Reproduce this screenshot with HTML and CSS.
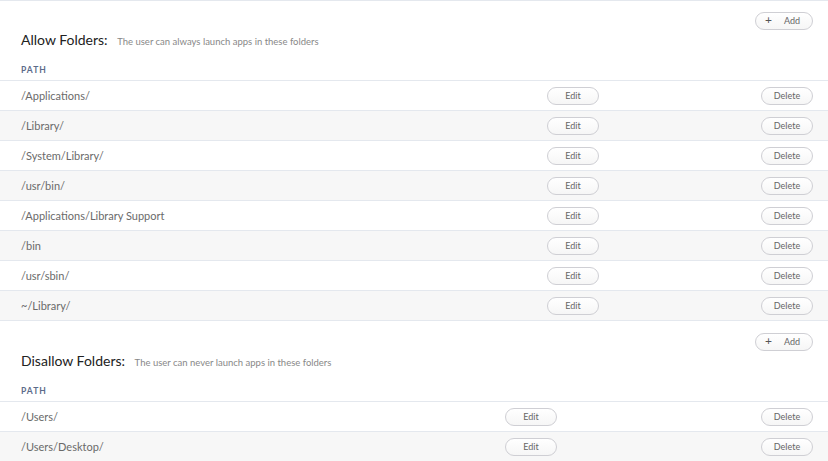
FILE: index.html
```html
<!DOCTYPE html>
<html lang="en">
<head>
  <meta charset="UTF-8">
  <title>Folder Rules</title>
  <link rel="stylesheet" href="styles.css">
</head>
<body>
  <section class="block">
    <div class="block-actions">
      <button class="pill pill-add"><span class="plus">+</span>Add</button>
    </div>
    <h2 class="block-title">Allow Folders: <span class="block-sub">The user can always launch apps in these folders</span></h2>
    <div class="folders">
      <div class="folders-head">PATH</div>
      <div class="row"><span class="path">/Applications/</span><button class="pill">Edit</button><button class="pill">Delete</button></div>
      <div class="row"><span class="path">/Library/</span><button class="pill">Edit</button><button class="pill">Delete</button></div>
      <div class="row"><span class="path">/System/Library/</span><button class="pill">Edit</button><button class="pill">Delete</button></div>
      <div class="row"><span class="path">/usr/bin/</span><button class="pill">Edit</button><button class="pill">Delete</button></div>
      <div class="row"><span class="path">/Applications/Library Support</span><button class="pill">Edit</button><button class="pill">Delete</button></div>
      <div class="row"><span class="path">/bin</span><button class="pill">Edit</button><button class="pill">Delete</button></div>
      <div class="row"><span class="path">/usr/sbin/</span><button class="pill">Edit</button><button class="pill">Delete</button></div>
      <div class="row"><span class="path">~/Library/</span><button class="pill">Edit</button><button class="pill">Delete</button></div>
    </div>
  </section>

  <section class="block">
    <div class="block-actions">
      <button class="pill pill-add"><span class="plus">+</span>Add</button>
    </div>
    <h2 class="block-title">Disallow Folders: <span class="block-sub">The user can never launch apps in these folders</span></h2>
    <div class="folders folders-deny">
      <div class="folders-head">PATH</div>
      <div class="row"><span class="path">/Users/</span><button class="pill">Edit</button><button class="pill">Delete</button></div>
      <div class="row"><span class="path">/Users/Desktop/</span><button class="pill">Edit</button><button class="pill">Delete</button></div>
    </div>
  </section>
</body>
</html>
```

FILE: styles.css
```css
* {
  box-sizing: border-box;
}

body {
  margin: 0;
  background: #fff;
  font-family: Lato, 'Noto Sans', sans-serif;
  color: #555;
}

.block {
  padding-top: 12px;
}

.block:first-child {
  border-top: 1px solid #e4e8ee;
  padding-top: 11px;
}

.block-actions {
  display: flex;
  justify-content: flex-end;
  padding-right: 15px;
}

.block-title {
  margin: 0;
  height: 21px;
  line-height: 20px;
  padding-left: 21px;
  font-size: 14px;
  font-weight: 400;
  color: #222;
}

.block-sub {
  margin-left: 6px;
  font-size: 9.5px;
  color: #888;
}

.pill {
  height: 18px;
  width: 52px;
  padding: 0;
  border: 1px solid #cfcfd4;
  border-radius: 9px;
  background: linear-gradient(#fff, #f6f6f6);
  font-family: inherit;
  font-size: 9px;
  color: #666;
  line-height: 16px;
}

.pill-add {
  width: 58px;
  text-align: right;
  padding-right: 12px;
  position: relative;
}

.plus {
  position: absolute;
  left: 9px;
  top: -1px;
  font-size: 12px;
  color: #555;
}

.folders-head {
  height: 30px;
  padding: 14px 0 0 21px;
  font-size: 8.5px;
  font-weight: 700;
  letter-spacing: 1px;
  color: #5c6b8a;
  border-bottom: 1px solid #e4e8ee;
}

.row {
  display: grid;
  grid-template-columns: 1fr 52px 52px;
  column-gap: 162px;
  align-items: center;
  height: 30px;
  padding: 0 15px 0 21px;
  border-bottom: 1px solid #e4e8ee;
}

.folders-deny .row {
  column-gap: 204px;
}

.row:nth-of-type(odd) {
  background: #f7f7f7;
}

.path {
  font-size: 11px;
  color: #6a6a6a;
}
```
